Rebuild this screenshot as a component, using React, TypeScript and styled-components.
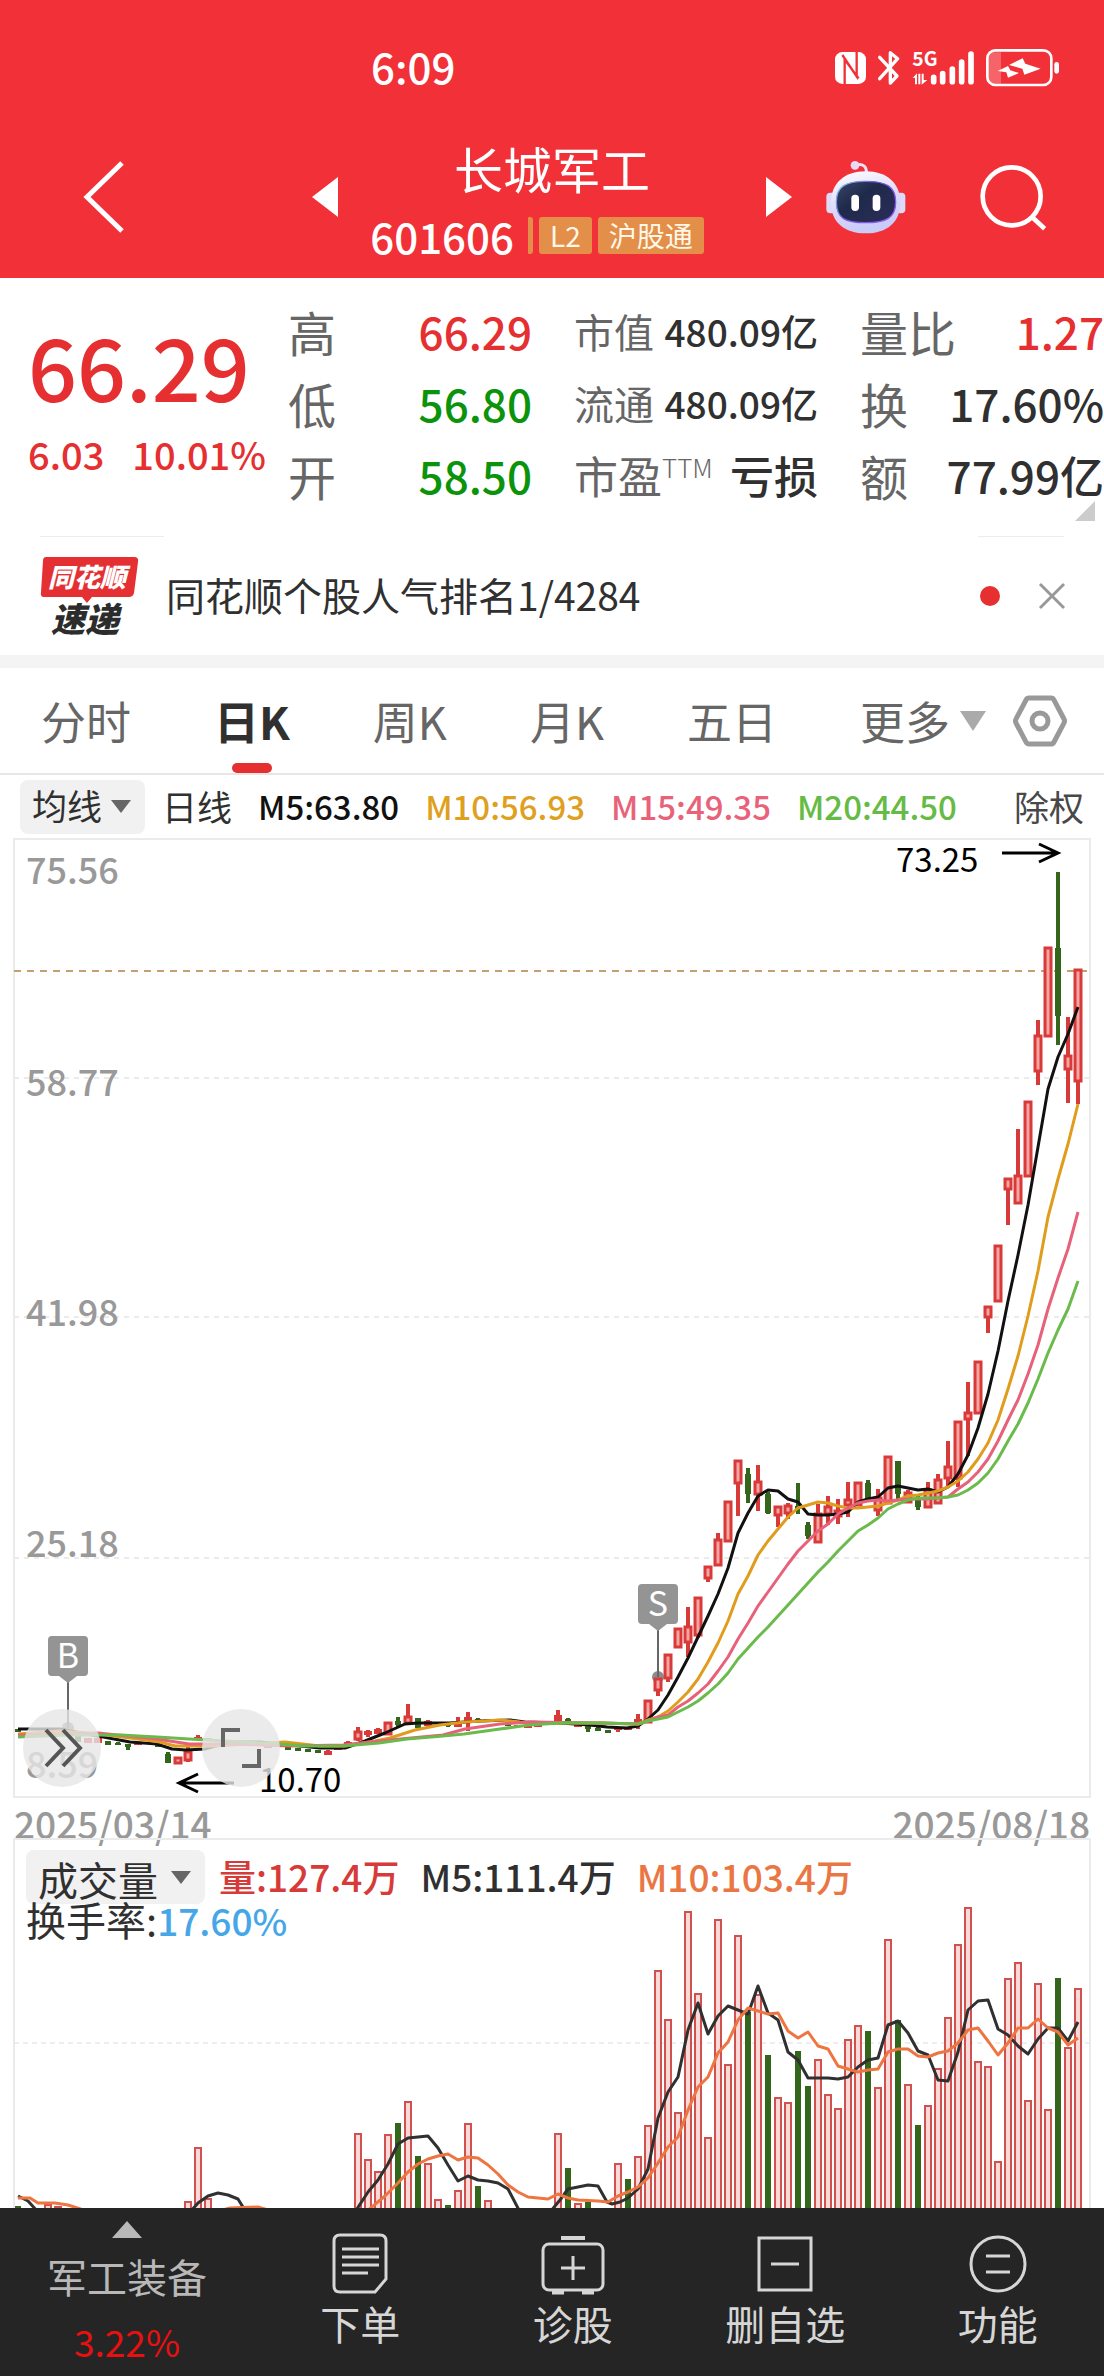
import React from "react";
import styled, { createGlobalStyle } from "styled-components";

const RED = "#e52f30";
const GREEN = "#0b930b";
const INK = "#303030";
const MUTED = "#666666";

const GlobalStyle = createGlobalStyle`
  * { box-sizing: border-box; }
  body {
    margin: 0;
    background: #ffffff;
    color: ${INK};
    font-family: "Noto Sans CJK SC", "Noto Sans", sans-serif;
  }
  button, select { font: inherit; color: inherit; border: 0; padding: 0; margin: 0; background: none; cursor: pointer; }
  h1, p, dl, dd, dt { margin: 0; font-weight: inherit; }
  svg { display: block; overflow: visible; }
`;

/* ---------- header ---------- */

const Header = styled.header`
  background: #f13037;
  color: #ffffff;
`;

const StatusBar = styled.div`
  display: flex;
  align-items: center;
  justify-content: space-between;
  height: 136px;
  padding: 0 44px 0 371px;
`;

const Clock = styled.time`
  padding-bottom: 4px;
  font-size: 42px;
  line-height: 48px;
  font-weight: 500;
`;

const TitleBar = styled.div`
  display: flex;
  align-items: center;
  height: 142px;
  padding: 0 58px 20px 80px;
`;

const IconButton = styled.button<{ $gap?: number }>`
  display: flex;
  flex: none;
  color: #ffffff;
  margin-left: ${(p) => p.$gap ?? 0}px;
`;

const StockSwitcher = styled.div`
  display: flex;
  align-items: center;
  justify-content: space-between;
  width: 480px;
  margin-left: auto;
`;

const StockTitle = styled.div`
  display: flex;
  flex-direction: column;
  align-items: center;
  gap: 11px;
`;

const StockName = styled.h1`
  font-size: 49px;
  line-height: 66px;
  font-weight: 400;
`;

const StockCode = styled.div`
  display: flex;
  align-items: center;
  gap: 6px;
  padding-right: 30px;
  font-size: 42px;
  line-height: 48px;
  font-weight: 500;
`;

const CodeMark = styled.i`
  width: 5px;
  height: 37px;
  margin-left: 8px;
  background: #e38e49;
  border-radius: 1px 3px 3px 1px;
`;

const Badge = styled.span`
  padding: 0 11px;
  height: 37px;
  border-radius: 3px;
  background: #e38e49;
  color: #fff8e8;
  font-size: 28px;
  line-height: 36px;
  font-weight: 400;
`;

/* ---------- quote ---------- */

const Quote = styled.section`
  position: relative;
  display: grid;
  grid-template-columns: minmax(0, 1fr) repeat(3, 244px);
  column-gap: 42px;
  height: 258px;
  padding: 17px 0 0 28px;
`;

const PriceBlock = styled.div`
  padding-top: 16px;
  color: ${RED};
  font-weight: 500;
  white-space: nowrap;
`;

const Price = styled.div`
  font-size: 86px;
  line-height: 108px;
`;

const Change = styled.div`
  display: flex;
  gap: 28px;
  font-size: 38px;
  line-height: 70px;
`;

const Facts = styled.dl`
  display: grid;
  grid-auto-rows: 72px;
`;

const Fact = styled.div`
  display: flex;
  align-items: center;
  justify-content: space-between;
  white-space: nowrap;
  line-height: 56px;
`;

const FactLabel = styled.dt<{ $size: number }>`
  color: ${MUTED};
  font-size: ${(p) => p.$size}px;
  font-weight: 400;
  sup { font-size: 26px; line-height: 20px; font-weight: 300; }
`;

const FactValue = styled.dd<{ $size: number; $color?: string }>`
  color: ${(p) => p.$color ?? INK};
  font-size: ${(p) => p.$size}px;
  font-weight: 500;
`;

const Corner = styled.i`
  position: absolute;
  right: 9px;
  bottom: 15px;
  border-style: solid;
  border-width: 0 0 20px 20px;
  border-color: transparent transparent #cccccc transparent;
`;

/* ---------- news strip ---------- */

const News = styled.section`
  display: flex;
  align-items: center;
  height: 132px;
  padding: 0 38px 0 40px;
  border-bottom: 13px solid #f4f4f4;
  background:
    linear-gradient(#ececec, #ececec) 40px 0 / 124px 1px no-repeat,
    linear-gradient(#ececec, #ececec) right 40px top 0 / 86px 1px no-repeat;
`;

const NewsLink = styled.a`
  margin-left: 26px;
  margin-right: auto;
  padding-bottom: 4px;
  color: ${INK};
  text-decoration: none;
  font-size: 39px;
  line-height: 56px;
`;

const Dot = styled.i`
  width: 20px;
  height: 20px;
  margin-right: 38px;
  border-radius: 50%;
  background: ${RED};
`;

/* ---------- period tabs ---------- */

const Tabs = styled.nav`
  display: flex;
  align-items: stretch;
  justify-content: space-between;
  height: 107px;
  padding: 0 36px 0 41px;
  border-bottom: 2px solid #e6e6e6;
`;

const Tab = styled.button<{ $active?: boolean }>`
  position: relative;
  display: flex;
  align-items: center;
  gap: 10px;
  font-size: 45px;
  line-height: 60px;
  color: ${(p) => (p.$active ? INK : MUTED)};
  font-weight: ${(p) => (p.$active ? 700 : 400)};
  &::after {
    content: "";
    display: ${(p) => (p.$active ? "block" : "none")};
    position: absolute;
    left: 50%;
    bottom: 0;
    width: 40px;
    height: 10px;
    margin-left: -20px;
    border-radius: 5px;
    background: ${RED};
  }
`;

const TabEnd = styled.div`
  display: flex;
  gap: 26px;
`;

/* ---------- indicator legends ---------- */

const Legend = styled.div`
  display: flex;
  align-items: center;
  height: 63px;
  padding: 0 20px;
  font-size: 35px;
  line-height: 48px;
  white-space: nowrap;
`;

const Chip = styled.label<{ $w: number; $size: number }>`
  display: grid;
  width: ${(p) => p.$w}px;
  height: 54px;
  border-radius: 8px;
  background: #f1f1f1;
  align-items: center;
  & > * { grid-area: 1 / 1; }
  select {
    appearance: none;
    width: 100%;
    height: 54px;
    padding: 0 0 3px 12px;
    font-size: ${(p) => p.$size}px;
  }
  svg { justify-self: end; margin-right: 14px; pointer-events: none; }
`;

const LegendText = styled.span<{ $gap: number }>`
  margin-left: ${(p) => p.$gap}px;
  padding-bottom: 2px;
`;

const Reading = styled.span<{ $color: string; $gap: number; $size?: number }>`
  margin-left: ${(p) => p.$gap}px;
  padding-bottom: 2px;
  color: ${(p) => p.$color};
  font-size: ${(p) => p.$size ?? 33}px;
  font-weight: 500;
`;

const Push = styled.span`
  margin-left: auto;
  padding-bottom: 2px;
  color: #484848;
`;

/* ---------- charts ---------- */

const ChartArea = styled.section`
  position: relative;
  svg.plot { width: 100%; height: auto; }
`;

const RoundButton = styled.button<{ $left: number }>`
  position: absolute;
  left: ${(p) => p.$left}px;
  bottom: 11px;
  display: grid;
  place-items: center;
  width: 78px;
  height: 78px;
  border-radius: 50%;
  background: rgba(230, 230, 230, 0.8);
`;

const Dates = styled.div`
  display: flex;
  justify-content: space-between;
  height: 40px;
  padding: 0 14px;
  color: #999999;
  font-size: 37px;
  line-height: 50px;
  font-weight: 500;
`;

const VolumeArea = styled.section`
  display: grid;
  & > * { grid-area: 1 / 1; }
  svg.plot { width: 100%; height: auto; overflow: hidden; }
`;

const VolumeHead = styled.div`
  position: relative;
  padding: 12px 26px 0;
  white-space: nowrap;
`;

const VolumeRow = styled.div`
  display: flex;
  align-items: center;
  height: 54px;
`;

const Turnover = styled.p`
  line-height: 30px;
  font-size: 40px;
  span { color: #46a7e8; font-size: 37px; font-weight: 500; }
`;

/* ---------- bottom bar ---------- */

const BottomBar = styled.nav`
  display: grid;
  grid-template-columns: 254px repeat(4, minmax(0, 1fr));
  height: 168px;
  background: #252525;
  color: #d6d6d6;
`;

const BarItem = styled.button`
  display: flex;
  flex-direction: column;
  align-items: center;
  justify-content: flex-start;
  padding-top: 24px;
  gap: 2px;
  font-size: 40px;
  line-height: 50px;
`;

const Sector = styled(BarItem)`
  padding-top: 13px;
  gap: 13px;
  color: #b8b8b8;
`;

const SectorChange = styled.span`
  margin-top: 2px;
  color: #e81010;
  font-size: 37px;
`;

/* ---------- icons ---------- */

const StatusIcons = () => (
  <svg width="225" height="38" viewBox="108 56 675 114" fill="#fff" aria-label="NFC 蓝牙 5G 电池充电中">
    <rect x="108" y="65" width="93" height="96" rx="22" />
    <path d="M137 164V88l42 56M173 62v76l-43-64" fill="none" stroke="#f13037" strokeWidth="7" />
    <path d="M242 81l52 56-20 21V67l22 18-54 60" fill="none" stroke="#fff" strokeWidth="10" strokeLinecap="round" strokeLinejoin="round" />
    <text x="340" y="108" fontSize="58" fontWeight="700">5G</text>
    <path d="M341 143l13-14v33h-6v-20zM358 130h6v32h-6zM368 130h6v19h11l-17 14z" />
    <g stroke="#fff" strokeWidth="17" strokeLinecap="round">
      <path d="M404 141v13M431 130v24M460 116v38M488 95v59M516 71v83" />
    </g>
    <path d="M572 66h34v94h-34q-6-10-6-20V86q0-12 6-20z" opacity=".25" />
    <rect x="565" y="60" width="192" height="104" rx="24" fill="none" stroke="#fff" strokeWidth="8" />
    <rect x="766" y="95" width="14" height="35" rx="7" />
    <path d="M630 104l41-20 8 16 46 15-49 18-6-18z" />
    <path d="M596 122l31-15 7 13 26 8-33 14-5-16z" />
  </svg>
);

const BackIcon = () => (
  <svg width="46" height="76" viewBox="0 0 46 76" fill="none" stroke="#fff" strokeWidth="5">
    <path d="M42 4L7 38l35 34" />
  </svg>
);

const Arrow = ({ flip }: { flip?: boolean }) => (
  <svg width="26" height="40" viewBox="0 0 26 40" fill="#fff">
    <path d={flip ? "M0 0v40l26-20z" : "M26 0v40L0 20z"} />
  </svg>
);

const RobotIcon = () => (
  <svg width="80" height="74" viewBox="77 388 240 222">
    <defs>
      <linearGradient id="shell" x1="0" y1="0" x2="0.3" y2="1">
        <stop offset="0" stopColor="#ffffff" />
        <stop offset="0.6" stopColor="#dcd8fb" />
        <stop offset="1" stopColor="#c9cbf8" />
      </linearGradient>
      <linearGradient id="visorRim" x1="0" y1="0" x2="1" y2="0.6">
        <stop offset="0" stopColor="#7fd6ee" />
        <stop offset="0.5" stopColor="#7157d8" />
        <stop offset="1" stopColor="#8a5cf0" />
      </linearGradient>
      <linearGradient id="visor" x1="0" y1="0" x2="1" y2="1">
        <stop offset="0" stopColor="#39456b" />
        <stop offset="0.4" stopColor="#1f2a4a" />
        <stop offset="1" stopColor="#2b2d59" />
      </linearGradient>
    </defs>
    <path d="M164 404c24-8 36 4 34 24" fill="none" stroke="#e8e2fb" strokeWidth="9" />
    <circle cx="164" cy="404" r="13" fill="#e9d9f5" />
    <rect x="78" y="486" width="28" height="62" rx="12" fill="#dcdaf8" />
    <rect x="288" y="486" width="27" height="62" rx="12" fill="#dcdaf8" />
    <path d="M196 422c64 0 104 36 104 94s-40 92-104 92S92 574 92 516s40-94 104-94z" fill="url(#shell)" />
    <path d="M196 452c62 0 90 16 90 62 0 48-28 62-90 62s-88-14-88-62c0-46 26-62 88-62z" fill="url(#visor)" stroke="url(#visorRim)" strokeWidth="4" />
    <rect x="153" y="492" width="23" height="49" rx="11" fill="#fff" />
    <rect x="217" y="492" width="23" height="49" rx="11" fill="#fff" />
  </svg>
);

const SearchIcon = () => (
  <svg width="66" height="68" viewBox="538 402 198 204" fill="none" stroke="#fff" strokeWidth="14">
    <circle cx="633" cy="502" r="87" />
    <path d="M694 564l38 35" />
  </svg>
);

const NewsLogo = () => (
  <svg width="100" height="80" viewBox="0 0 100 80" aria-label="同花顺速递">
    <path d="M6 1h88q5 0 4 5l-4 31q-1 4-5 4H52l-5 6-5-6H4q-4 0-3-5L3 5q0-4 3-4z" fill="#e53033" />
    <text x="47" y="31" textAnchor="middle" fontSize="26" fontWeight="900" fontStyle="italic" fill="#fff">同花顺</text>
    <text x="45" y="76" textAnchor="middle" fontSize="34" fontWeight="900" fontStyle="italic" fill="#2c2c2c">速递</text>
  </svg>
);

const Caret = ({ w, h, color, up }: { w: number; h: number; color: string; up?: boolean }) => (
  <svg width={w} height={h} viewBox="0 0 20 12" preserveAspectRatio="none" fill={color}>
    <path d={up ? "M0 12h20L10 0z" : "M0 0h20L10 12z"} />
  </svg>
);

const CloseIcon = () => (
  <svg width="28" height="28" viewBox="0 0 28 28" stroke="#999" strokeWidth="3" fill="none">
    <path d="M2 2l24 24M26 2L2 26" />
  </svg>
);

const HexIcon = () => (
  <svg width="56" height="54" viewBox="0 0 56 54" stroke="#999" strokeWidth="5" fill="none" strokeLinejoin="round">
    <path d="M17 4h22q2 0 3 2l10 19q1 2 0 4L42 48q-1 2-3 2H17q-2 0-3-2L4 29q-1-2 0-4L14 6q1-2 3-2z" />
    <circle cx="28" cy="27" r="8" />
  </svg>
);

const navIcon = { width: 66, height: 64, viewBox: "0 0 66 64", fill: "none", stroke: "#d6d6d6", strokeWidth: 3 };

const OrderIcon = () => (
  <svg {...navIcon}>
    <path d="M13 3h40q6 0 6 6v38L48 60H13q-6 0-6-6V9q0-6 6-6z" />
    <path d="M15 17h37M15 25h37M15 33h37M15 41h26" />
  </svg>
);
const DiagnoseIcon = () => (
  <svg {...navIcon}>
    <path d="M21 6h24" strokeWidth="4" />
    <rect x="3" y="12" width="60" height="46" rx="6" />
    <path d="M33 24v24M21 36h24" />
    <path d="M12 60h12M42 60h12" strokeWidth="5" />
  </svg>
);
const RemoveIcon = () => (
  <svg {...navIcon}>
    <rect x="7" y="6" width="52" height="52" />
    <path d="M19 32h28" />
  </svg>
);
const MoreIcon = () => (
  <svg {...navIcon}>
    <circle cx="33" cy="32" r="27" />
    <path d="M21 24h24M21 40h24" />
  </svg>
);

/* ---------- chart data ---------- */

type Candle = [x: number, high: number, top: number, bottom: number, low: number, down?: 1];

const candles: Candle[] = [
  [18, 1729, 1729, 1732, 1732, 1], [48, 1728, 1728, 1731, 1731], [78, 1736, 1736, 1742, 1742, 1],
  [88, 1738, 1738, 1743, 1743], [98, 1738, 1738, 1743, 1743], [108, 1741, 1741, 1745, 1745, 1],
  [118, 1742, 1743, 1745, 1745, 1], [128, 1744, 1744, 1747, 1750, 1], [138, 1742, 1742, 1745, 1745],
  [158, 1745, 1745, 1747, 1747, 1], [168, 1752, 1754, 1763, 1763, 1], [178, 1757, 1757, 1764, 1764],
  [188, 1747, 1751, 1761, 1762], [198, 1735, 1737, 1740, 1740], [208, 1738, 1738, 1741, 1741],
  [268, 1746, 1746, 1748, 1748], [288, 1746, 1747, 1750, 1750, 1], [298, 1748, 1748, 1751, 1751, 1],
  [308, 1749, 1749, 1752, 1752, 1], [318, 1750, 1750, 1753, 1753, 1], [328, 1750, 1751, 1755, 1755],
  [338, 1748, 1748, 1750, 1750], [348, 1741, 1742, 1744, 1744], [358, 1727, 1731, 1740, 1741],
  [368, 1730, 1731, 1735, 1737], [378, 1728, 1729, 1734, 1734], [388, 1722, 1722, 1735, 1735],
  [398, 1717, 1721, 1725, 1727, 1], [408, 1704, 1716, 1724, 1724], [418, 1718, 1718, 1728, 1728, 1],
  [428, 1720, 1721, 1726, 1727], [448, 1722, 1724, 1726, 1727, 1], [458, 1717, 1722, 1727, 1727],
  [468, 1712, 1717, 1722, 1731], [478, 1718, 1719, 1722, 1722, 1], [488, 1719, 1719, 1722, 1722],
  [508, 1724, 1724, 1726, 1726, 1], [518, 1725, 1725, 1727, 1727], [528, 1725, 1725, 1728, 1728],
  [538, 1725, 1725, 1727, 1727], [558, 1710, 1715, 1721, 1721], [568, 1718, 1719, 1722, 1722, 1],
  [578, 1723, 1724, 1727, 1727], [588, 1724, 1725, 1729, 1732, 1], [598, 1727, 1728, 1731, 1731, 1],
  [608, 1730, 1730, 1733, 1733, 1], [618, 1727, 1728, 1730, 1732], [628, 1727, 1727, 1730, 1730],
  [638, 1714, 1719, 1725, 1729], [648, 1700, 1700, 1723, 1723], [658, 1678, 1678, 1691, 1696],
  [668, 1654, 1654, 1679, 1682], [678, 1628, 1628, 1648, 1648], [688, 1607, 1626, 1643, 1657],
  [698, 1597, 1597, 1636, 1638], [708, 1566, 1566, 1579, 1582], [718, 1533, 1539, 1566, 1566],
  [728, 1501, 1501, 1542, 1542], [738, 1460, 1460, 1484, 1516], [748, 1468, 1474, 1494, 1503, 1],
  [758, 1465, 1481, 1495, 1511], [768, 1492, 1494, 1513, 1514, 1], [778, 1506, 1506, 1516, 1527],
  [788, 1503, 1505, 1514, 1519], [798, 1483, 1506, 1509, 1514, 1], [808, 1522, 1525, 1536, 1539, 1],
  [818, 1504, 1513, 1543, 1543], [828, 1496, 1506, 1515, 1525], [838, 1499, 1510, 1517, 1524],
  [848, 1482, 1499, 1506, 1517], [858, 1482, 1482, 1506, 1506], [868, 1480, 1483, 1499, 1499, 1],
  [878, 1489, 1497, 1511, 1516], [888, 1456, 1456, 1504, 1504], [898, 1461, 1461, 1494, 1499, 1],
  [908, 1490, 1492, 1503, 1503], [918, 1495, 1497, 1507, 1510, 1], [928, 1482, 1489, 1508, 1508],
  [938, 1474, 1479, 1504, 1504], [948, 1441, 1466, 1479, 1488], [958, 1421, 1421, 1479, 1487],
  [968, 1382, 1412, 1420, 1456], [978, 1361, 1361, 1414, 1414], [988, 1306, 1306, 1318, 1333],
  [998, 1245, 1245, 1302, 1302], [1008, 1178, 1178, 1190, 1225], [1018, 1129, 1175, 1204, 1204],
  [1028, 1101, 1101, 1177, 1177], [1038, 1020, 1035, 1072, 1085], [1048, 947, 947, 1037, 1037],
  [1058, 872, 948, 1016, 1045, 1], [1068, 1017, 1055, 1070, 1103], [1078, 969, 969, 1082, 1104],
];

/** Joins a hand-placed start of a line with evenly stepped values that follow it. */
const line = (start: string, from: number, ys: number[]) =>
  start + " " + ys.map((y, i) => `${from + i * 10},${y}`).join(" ");

const averages = [
  {
    color: "#111111",
    points: line(
      "18,1729 60,1729 98,1736 130,1742 157,1744 172,1749 186,1750 205,1749 230,1742 260,1742 290,1745 320,1748 345,1748 365,1741 385,1733 405,1724 418,1723 450,1723 480,1721 510,1720 525,1722 560,1723 590,1725 607,1727 627,1728",
      638,
      [1726, 1719, 1710, 1695, 1677, 1658, 1637, 1616, 1594, 1568, 1533, 1513, 1496, 1490, 1491, 1499, 1502, 1514, 1515, 1515, 1514, 1512, 1502, 1499, 1497, 1488, 1486, 1488, 1490, 1489, 1492, 1487, 1474, 1455, 1428, 1394, 1351, 1301, 1255, 1205, 1147, 1089, 1057, 1034, 1007]
    ),
  },
  {
    color: "#e09c1c",
    points: line(
      "18,1734 60,1731 98,1734 130,1738 160,1742 175,1746 215,1746 250,1744 285,1742 320,1746 345,1746 375,1741 390,1738 415,1730 440,1725 465,1722 500,1720 520,1722 560,1723 600,1723",
      638,
      [1724, 1720, 1717, 1711, 1702, 1692, 1679, 1662, 1643, 1621, 1594, 1576, 1555, 1541, 1529, 1517, 1508, 1505, 1502, 1503, 1506, 1508, 1508, 1507, 1506, 1503, 1500, 1496, 1495, 1493, 1491, 1487, 1481, 1472, 1459, 1443, 1420, 1389, 1356, 1316, 1271, 1217, 1179, 1144, 1104]
    ),
  },
  {
    color: "#e8607a",
    points: line(
      "18,1735 98,1733 157,1739 189,1744 230,1744 290,1746 343,1745 379,1741 443,1735 465,1729 500,1724 530,1722 600,1723",
      638,
      [1724, 1721, 1717, 1715, 1707, 1701, 1693, 1684, 1671, 1657, 1639, 1623, 1606, 1592, 1578, 1564, 1551, 1541, 1531, 1524, 1514, 1508, 1503, 1501, 1500, 1501, 1500, 1499, 1499, 1499, 1498, 1497, 1489, 1482, 1472, 1459, 1441, 1420, 1400, 1374, 1345, 1309, 1278, 1249, 1212]
    ),
  },
  {
    color: "#6bba4c",
    points: line(
      "18,1737 68,1735 121,1735 157,1737 189,1739 243,1742 279,1744 304,1746 343,1746 379,1743 407,1739 443,1736 464,1734 500,1729 529,1725 560,1723 603,1723",
      638,
      [1724, 1721, 1719, 1717, 1712, 1707, 1701, 1693, 1684, 1673, 1659, 1648, 1637, 1627, 1616, 1605, 1594, 1583, 1572, 1562, 1551, 1541, 1531, 1525, 1518, 1509, 1504, 1500, 1498, 1498, 1498, 1497, 1495, 1490, 1483, 1473, 1459, 1441, 1424, 1403, 1379, 1353, 1330, 1309, 1281]
    ),
  },
];

const volumes: [x: number, top: number, down?: 1][] = [
  [18, 2206, 1], [48, 2204], [58, 2206], [188, 2201], [198, 2147], [208, 2198], [358, 2133], [368, 2159],
  [378, 2171], [388, 2134], [398, 2123, 1], [408, 2101], [418, 2156, 1], [428, 2163], [438, 2199],
  [448, 2205, 1], [458, 2190], [468, 2123], [478, 2186, 1], [488, 2200], [558, 2133], [568, 2168, 1],
  [578, 2203], [588, 2202, 1], [618, 2163], [628, 2179, 1], [638, 2156], [648, 2125], [658, 1970],
  [668, 2019], [678, 2112], [688, 1911], [698, 1993], [708, 2137], [718, 1919], [728, 2064], [738, 1935],
  [748, 2012, 1], [758, 1994], [768, 2055, 1], [778, 2097], [788, 2102], [798, 2051, 1], [808, 2086, 1],
  [818, 2059], [828, 2094], [838, 2108], [848, 2039], [858, 2025], [868, 2031, 1], [878, 2087],
  [888, 1939], [898, 2020, 1], [908, 2084], [918, 2125, 1], [928, 2105], [938, 2068], [948, 2017],
  [958, 1944], [968, 1907], [978, 2061], [988, 2066], [998, 2161], [1008, 1978], [1018, 1962],
  [1028, 2100], [1038, 1983], [1048, 2109], [1058, 1978, 1], [1068, 2047], [1078, 1988],
];

const volumeAverages = [
  {
    color: "#303030",
    points: line(
      "18,2196 28,2201 38,2212 190,2212 198,2203 208,2196 218,2193 228,2195 238,2199 246,2212 355,2212 368,2192 378,2180 388,2164 398,2144 408,2138 418,2137 428,2136 438,2148 448,2165 458,2181 468,2176 478,2180 488,2181 498,2183 508,2189 520,2212 550,2212 560,2200 568,2189 578,2187 588,2185 598,2186 607,2202 612,2204 620,2202",
      628,
      [2198, 2189, 2169, 2118, 2092, 2077, 2030, 2003, 2034, 2016, 2006, 2010, 2014, 1986, 2013, 2020, 2052, 2060, 2078, 2078, 2078, 2079, 2077, 2067, 2060, 2058, 2025, 2021, 2033, 2051, 2055, 2080, 2081, 2052, 2010, 2001, 2000, 2029, 2035, 2046, 2054, 2039, 2028, 2028, 2041, 2022]
    ),
  },
  {
    color: "#ee7440",
    points: line(
      "18,2198 30,2198 38,2203 55,2203 68,2205 90,2212 215,2212 230,2208 258,2207 275,2212 366,2212 385,2196 398,2183 408,2172 418,2164 428,2159 438,2156 448,2154 458,2160 468,2157 478,2158 488,2165 498,2174 508,2185 518,2192 528,2197 548,2199 558,2194 568,2198 578,2200 598,2201 608,2202 618,2196",
      628,
      [2192, 2187, 2178, 2163, 2147, 2137, 2110, 2087, 2077, 2053, 2042, 2020, 2008, 2011, 2014, 2013, 2031, 2038, 2032, 2046, 2049, 2066, 2069, 2072, 2070, 2069, 2052, 2049, 2049, 2056, 2057, 2053, 2051, 2043, 2030, 2028, 2041, 2055, 2043, 2028, 2028, 2019, 2028, 2032, 2045, 2038]
    ),
  },
];

const axis: [label: string, y: number][] = [
  ["75.56", 884], ["58.77", 1096], ["41.98", 1326], ["25.18", 1557], ["8.59", 1778],
];

const markers: [label: string, x: number, top: number, foot: number][] = [
  ["B", 68, 1636, 1728], ["S", 658, 1584, 1677],
];

const PriceChart = () => (
  <svg className="plot" viewBox="0 838 1104 960" role="img" aria-label="日K线图">
    <rect x="14" y="839" width="1076" height="958" fill="none" stroke="#ebebeb" strokeWidth="2" />
    {[1078, 1317, 1558].map((y) => (
      <path key={y} d={`M14 ${y}H1090`} stroke="#ebebeb" strokeWidth="2" strokeDasharray="5 5" />
    ))}
    <path d="M14 971H1090" stroke="#c3a06f" strokeWidth="2" strokeDasharray="7 6" />
    <g fill="#999" fontSize="36" fontWeight="500">
      {axis.map(([t, y]) => <text key={t} x="26" y={y}>{t}</text>)}
    </g>
    {markers.map(([t, x, top, foot]) => (
      <g key={t}>
        <circle cx={x} cy={foot} r="6" fill="#8c8c8c" />
        <path d={`M${x} ${top + 44}V${foot}`} stroke="#666" strokeWidth="2" />
        <rect x={x - 20} y={top} width="40" height="40" rx="4" fill="#949494" />
        <path d={`M${x - 9} ${top + 40}h18l-9 7z`} fill="#949494" />
        <text x={x} y={top + 32} textAnchor="middle" fontSize="34" fill="#fff">{t}</text>
      </g>
    ))}
    {candles.map(([x, high, top, bottom, low, down]) => {
      const tone = down ? "#33651a" : "#d73a38";
      const tall = bottom - top > 6;
      return (
        <g key={x}>
          {high < top && <path d={`M${x} ${high}V${top}`} stroke={tone} strokeWidth="4" />}
          {low > bottom && <path d={`M${x} ${bottom}V${low}`} stroke={tone} strokeWidth="4" />}
          {down || !tall ? (
            <rect x={down ? x - 3 : x - 4} y={top} width={down ? 6 : 8} height={Math.max(2, bottom - top)} fill={tone} />
          ) : (
            <rect x={x - 3} y={top + 1} width="6" height={bottom - top - 2} fill="#f7a5a2" stroke={tone} strokeWidth="3" />
          )}
        </g>
      );
    })}
    {averages.map((a) => (
      <polyline key={a.color} points={a.points} fill="none" stroke={a.color} strokeWidth="3" strokeLinejoin="round" />
    ))}
    <g fontSize="33" fill="#000">
      <text x="896" y="872">73.25</text>
      <text x="259" y="1792">10.70</text>
    </g>
    <g fill="none" stroke="#000" strokeWidth="3">
      <path d="M1002 853H1058M1039 844L1058 853 1039 862" />
      <path d="M234 1783H179M198 1774L179 1783 198 1792" />
    </g>
  </svg>
);

const VolumeChart = () => (
  <svg className="plot" viewBox="0 1838 1104 370" role="img" aria-label="成交量图">
    <path d="M14 2210V1839H1090V2210" fill="none" stroke="#ebebeb" strokeWidth="2" />
    <path d="M14 2043H1090" stroke="#dcdcdc" strokeDasharray="5 4" />
    {volumes.map(([x, top, down]) =>
      down ? (
        <rect key={x} x={x - 3} y={top} width="6" height={2212 - top} fill="#33651a" />
      ) : (
        <rect key={x} x={x - 3} y={top + 1} width="6" height={2212 - top} fill="#fad9d7" stroke="#cf5250" strokeWidth="2" />
      )
    )}
    {volumeAverages.map((a) => (
      <polyline key={a.color} points={a.points} fill="none" stroke={a.color} strokeWidth="3" strokeLinejoin="round" />
    ))}
  </svg>
);

/* ---------- page ---------- */

const facts: { label: React.ReactNode; value: string; ls: number; vs: number; color?: string }[][] = [
  [
    { label: "高", value: "66.29", ls: 48, vs: 44, color: RED },
    { label: "低", value: "56.80", ls: 48, vs: 44, color: GREEN },
    { label: "开", value: "58.50", ls: 48, vs: 44, color: GREEN },
  ],
  [
    { label: "市值", value: "480.09亿", ls: 40, vs: 37 },
    { label: "流通", value: "480.09亿", ls: 40, vs: 37 },
    { label: <>市盈<sup>TTM</sup></>, value: "亏损", ls: 44, vs: 44 },
  ],
  [
    { label: "量比", value: "1.27", ls: 48, vs: 44, color: RED },
    { label: "换", value: "17.60%", ls: 48, vs: 44 },
    { label: "额", value: "77.99亿", ls: 48, vs: 44 },
  ],
];

export default function App() {
  return (
    <>
      <GlobalStyle />
      <Header>
        <StatusBar>
          <Clock>6:09</Clock>
          <StatusIcons />
        </StatusBar>
        <TitleBar>
          <IconButton aria-label="返回"><BackIcon /></IconButton>
          <StockSwitcher>
            <IconButton aria-label="上一只"><Arrow /></IconButton>
            <StockTitle>
              <StockName>长城军工</StockName>
              <StockCode>
                601606
                <CodeMark />
                <Badge>L2</Badge>
                <Badge>沪股通</Badge>
              </StockCode>
            </StockTitle>
            <IconButton aria-label="下一只"><Arrow flip /></IconButton>
          </StockSwitcher>
          <IconButton $gap={34} aria-label="智能助手"><RobotIcon /></IconButton>
          <IconButton $gap={74} aria-label="搜索"><SearchIcon /></IconButton>
        </TitleBar>
      </Header>

      <Quote>
        <PriceBlock>
          <Price>66.29</Price>
          <Change><span>6.03</span><span>10.01%</span></Change>
        </PriceBlock>
        {facts.map((col, i) => (
          <Facts key={i}>
            {col.map((f, j) => (
              <Fact key={j}>
                <FactLabel $size={f.ls}>{f.label}</FactLabel>
                <FactValue $size={f.vs} $color={f.color}>{f.value}</FactValue>
              </Fact>
            ))}
          </Facts>
        ))}
        <Corner />
      </Quote>

      <News>
        <NewsLogo />
        <NewsLink href="#rank">同花顺个股人气排名1/4284</NewsLink>
        <Dot />
        <button aria-label="关闭"><CloseIcon /></button>
      </News>

      <Tabs>
        <Tab>分时</Tab>
        <Tab $active>日K</Tab>
        <Tab>周K</Tab>
        <Tab>月K</Tab>
        <Tab>五日</Tab>
        <TabEnd>
          <Tab>更多<Caret w={26} h={20} color="#aaaaaa" /></Tab>
          <Tab aria-label="设置"><HexIcon /></Tab>
        </TabEnd>
      </Tabs>

      <Legend>
        <Chip $w={125} $size={35}>
          <select aria-label="主图指标"><option>均线</option></select>
          <Caret w={20} h={13} color="#666666" />
        </Chip>
        <LegendText $gap={17}>日线</LegendText>
        <Reading $gap={26} $color="#111111">M5:63.80</Reading>
        <Reading $gap={26} $color="#dfa01f">M10:56.93</Reading>
        <Reading $gap={26} $color="#e8637a">M15:49.35</Reading>
        <Reading $gap={26} $color="#66bb45">M20:44.50</Reading>
        <Push>除权</Push>
      </Legend>

      <ChartArea>
        <PriceChart />
        <RoundButton $left={23} aria-label="展开">
          <svg width="40" height="40" viewBox="0 0 40 40" fill="none" stroke="#555" strokeWidth="4">
            <path d="M4 2l17 18L4 38M21 2l17 18-17 18" />
          </svg>
        </RoundButton>
        <RoundButton $left={202} aria-label="全屏">
          <svg width="42" height="42" viewBox="0 0 42 42" fill="none" stroke="#666" strokeWidth="4">
            <path d="M3 20V3h17M22 39h17V22" />
          </svg>
        </RoundButton>
      </ChartArea>

      <Dates>
        <span>2025/03/14</span>
        <span>2025/08/18</span>
      </Dates>

      <VolumeArea>
        <VolumeChart />
        <VolumeHead>
          <VolumeRow>
            <Chip $w={179} $size={40}>
              <select aria-label="副图指标"><option>成交量</option></select>
              <Caret w={20} h={13} color="#666666" />
            </Chip>
            <Reading $gap={14} $size={37} $color="#d63b39">量:127.4万</Reading>
            <Reading $gap={21} $size={37} $color={INK}>M5:111.4万</Reading>
            <Reading $gap={21} $size={37} $color="#ea7644">M10:103.4万</Reading>
          </VolumeRow>
          <Turnover>换手率:<span>17.60%</span></Turnover>
        </VolumeHead>
      </VolumeArea>

      <BottomBar>
        <Sector>
          <Caret w={30} h={17} color="#b8b8b8" up />
          军工装备
          <SectorChange>3.22%</SectorChange>
        </Sector>
        <BarItem><OrderIcon />下单</BarItem>
        <BarItem><DiagnoseIcon />诊股</BarItem>
        <BarItem><RemoveIcon />删自选</BarItem>
        <BarItem><MoreIcon />功能</BarItem>
      </BottomBar>
    </>
  );
}
